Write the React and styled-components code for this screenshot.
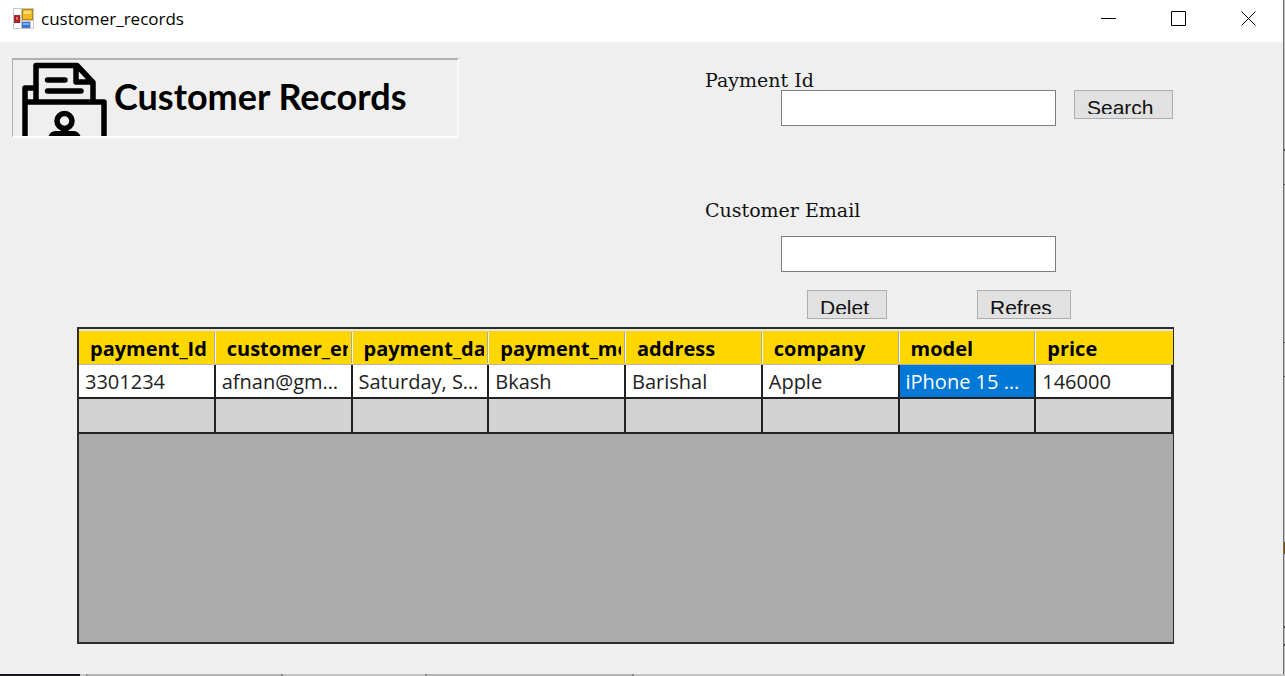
import React from "react";
import styled, { createGlobalStyle } from "styled-components";

const GlobalStyle = createGlobalStyle`
  *, *::before, *::after { box-sizing: border-box; }
  body { margin: 0; background: #c4c4c4; }
`;

const Desktop = styled.div`
  display: grid;
  grid-template-columns: minmax(0, 1fr) 2px;
  grid-template-rows: minmax(0, 1fr) 2px;
  min-height: 100vh;
  font-family: "Open Sans", "Noto Sans", sans-serif;
  color: #000;
`;

const Window = styled.main`
  display: flex;
  flex-direction: column;
  background: #efefef;
`;

const RightEdge = styled.div`
  border-left: 1px solid #6e6e6e;
  background: linear-gradient(
    #c4c4c4 149px, #444 149px 151px, #c4c4c4 151px 184px, #444 184px 185px,
    #c4c4c4 185px 342px, #444 342px 343px, #c4c4c4 343px 376px, #444 376px 377px,
    #c4c4c4 377px 542px, #805000 542px 554px, #c4c4c4 554px 626px,
    #444 626px 628px, #c4c4c4 628px 644px, #444 644px 646px, #c4c4c4 646px
  );
`;

const BottomEdge = styled.div`
  grid-column: 1 / -1;
  background: linear-gradient(
    90deg, #17171b 80px, #c8c8c8 80px 86px, #999 86px 88px, #b4b4b4 88px 281px,
    #888 281px 283px, #c4c4c4 283px 425px, #888 425px 427px, #b4b4b4 427px 632px,
    #888 632px 634px, #c4c4c4 634px
  );
`;

const TitleBar = styled.header`
  display: flex;
  align-items: flex-start;
  height: 42px;
  padding: 0 0 0 13px;
  background: #fff;

  > svg { margin-top: 8px; }
`;

const WindowTitle = styled.span`
  flex: 1;
  margin: 7px 0 0 7px;
  font-size: 17px;
  line-height: 24px;
`;

const WindowButton = styled.button`
  display: grid;
  place-items: center;
  width: 70px;
  height: 37px;
  padding: 0;
  border: 0;
  background: transparent;
`;

const Top = styled.div`
  display: grid;
  grid-template-columns: minmax(0, 1fr) 578px;
`;

const Banner = styled.div`
  display: flex;
  width: 447px;
  height: 80px;
  margin: 16px 0 0 12px;
  overflow: hidden;
  border: 2px solid;
  border-color: #b0b0b0 #fafafa #fff #b0b0b0;
  border-left-width: 1px;
`;

const BannerTitle = styled.h1`
  margin: 0 0 0 5px;
  font-family: Lato, sans-serif;
  font-size: 36px;
  font-weight: 700;
  line-height: 73px;
  white-space: nowrap;
`;

const Form = styled.form`
  padding: 26px 0 8px;
`;

const Label = styled.label`
  display: block;
  height: 22px;
  font-family: "DejaVu Serif", serif;
  font-size: 19px;
  line-height: 24px;
  color: #111;
`;

const Controls = styled.div`
  display: flex;
  align-items: flex-start;
  gap: ${(p) => p.$gap || 18}px;
  margin: ${(p) => p.$above || 0}px 0 ${(p) => p.$below || 0}px;
  padding-left: ${(p) => p.$indent || 76}px;
`;

const TextBox = styled.input`
  width: 275px;
  height: 36px;
  padding: 0 6px;
  border: 1px solid #7c7c7c;
  background: #fff;
  font: 20px "Liberation Sans", sans-serif;
`;

const PushButton = styled.button`
  width: ${(p) => p.$width}px;
  height: 29px;
  padding: 5px 12px;
  border: 1px solid #adadad;
  background: #e1e1e1;
  color: #111;
  font: 21px/24px "Liberation Sans", sans-serif;
  text-align: left;
`;

const ClippedText = styled.span`
  display: block;
  height: 18px;
  overflow: hidden;
`;

const GridPane = styled.section`
  flex: 1;
  min-height: 316px;
  margin: 0 109px 30px 77px;
  border: 2px solid #2c2c2c;
  border-right-width: 1px;
  background: #ababab;
`;

const Grid = styled.table`
  width: 100%;
  table-layout: fixed;
  border-collapse: separate;
  border-spacing: 0;
  border-top: 2px solid #e4e4e4;
`;

const HeaderCell = styled.th`
  position: relative;
  height: 34px;
  padding: 2px 5px 0 11px;
  border-bottom: 1px solid #b4b4b4;
  background: #ffd700;
  font-size: 20px;
  font-weight: 700;
  line-height: 31px;
  text-align: left;

  &:not(:last-child)::after {
    content: "";
    position: absolute;
    inset: 1px 0 1px auto;
    width: 2px;
    border-left: 1px solid #a8a8a8;
    background: #f4f4f4;
  }
`;

const HeaderText = styled.span`
  display: block;
  overflow: hidden;
  white-space: nowrap;
`;

const Cell = styled.td`
  height: ${(p) => (p.$blank ? 35 : 34)}px;
  padding: 2px 7px 0 6px;
  overflow: hidden;
  border-right: 2px solid #222;
  border-bottom: 2px solid #222;
  background: ${(p) => (p.$selected ? "#0078d7" : p.$blank ? "#d3d3d3" : "#fff")};
  color: ${(p) => (p.$selected ? "#fff" : "#222")};
  font-size: 20px;
  line-height: 30px;
  text-overflow: ellipsis;
  white-space: nowrap;
`;

const AppIcon = () => (
  <svg width="21" height="21" viewBox="0 0 21 21" aria-hidden="true">
    <path d="M0 0h21v21H0z" fill="#c6c9cc" />
    <path d="M1 1h7v6H1zM1 15h7v5H1zM18 13h2v7h-2z" fill="#fff" />
    <path d="M9 1h11v11H9z" fill="#b88618" />
    <path d="M10 2h9v9h-9z" fill="#f4b91f" />
    <path d="M11 3h7v3h-7z" fill="#ffdb72" />
    <path d="M1 7h6v8H1z" fill="#aa2328" />
    <path d="M3 9h2v3H3z" fill="#e66a65" />
    <path d="M9 14h8v6H9z" fill="#3e73d1" />
    <path d="M10 15h6v2h-6z" fill="#79aff3" />
  </svg>
);

const RecordsIcon = () => (
  <svg width="96" height="76" viewBox="13 60 96 76" aria-hidden="true" style={{ flexShrink: 0 }}>
    <g fill="none" stroke="#000" strokeWidth="5.5" strokeLinejoin="round" strokeLinecap="round">
      <path d="M25 140V88h11M25 102h79v38M36 101V65.500h41l16 17V101M76 66v16h16" />
      <path d="M47.500 80H65M47.500 91H81" />
      <circle cx="64.500" cy="121" r="7.500" />
    </g>
    <path d="M48 138c1-5 4-7 8-7h17c4 0 7 2 8 7z" />
  </svg>
);

const WINDOW_ACTIONS = [
  ["Minimize", "M0 7.500h15"],
  ["Maximize", "M.5 .5h14v14H.5z"],
  ["Close", "M.5 .5l14 14M14.500 .5l-14 14"],
];

const RECORD = [
  ["payment_Id", "3301234"],
  ["customer_email", "afnan@gmail.com"],
  ["payment_date", "Saturday, September"],
  ["payment_method", "Bkash"],
  ["address", "Barishal"],
  ["company", "Apple"],
  ["model", "iPhone 15 Pro Max"],
  ["price", "146000"],
];

const Push = ({ width, children }) => (
  <PushButton type="button" $width={width}>
    <ClippedText>{children}</ClippedText>
  </PushButton>
);

export default function App() {
  return (
    <Desktop>
      <GlobalStyle />
      <Window>
        <TitleBar>
          <AppIcon />
          <WindowTitle>customer_records</WindowTitle>
          {WINDOW_ACTIONS.map(([name, d]) => (
            <WindowButton key={name} type="button" aria-label={name}>
              <svg width="15" height="15" viewBox="0 0 15 15" fill="none" stroke="#000">
                <path d={d} />
              </svg>
            </WindowButton>
          ))}
        </TitleBar>
        <Top>
          <Banner>
            <RecordsIcon />
            <BannerTitle>Customer Records</BannerTitle>
          </Banner>
          <Form>
            <Label htmlFor="payment-id">Payment Id</Label>
            <Controls $below={72}>
              <TextBox id="payment-id" type="text" />
              <Push width={99}>Search</Push>
            </Controls>
            <Label htmlFor="customer-email">Customer Email</Label>
            <Controls $above={16} $below={18}>
              <TextBox id="customer-email" type="text" />
            </Controls>
            <Controls $indent={102} $gap={90}>
              <Push width={80}>Delet</Push>
              <Push width={94}>Refres</Push>
            </Controls>
          </Form>
        </Top>
        <GridPane>
          <Grid>
            <thead>
              <tr>
                {RECORD.map(([name]) => (
                  <HeaderCell key={name} scope="col">
                    <HeaderText>{name}</HeaderText>
                  </HeaderCell>
                ))}
              </tr>
            </thead>
            <tbody>
              <tr>
                {RECORD.map(([name, value]) => (
                  <Cell key={name} $selected={name === "model"}>{value}</Cell>
                ))}
              </tr>
              <tr>
                {RECORD.map(([name]) => (
                  <Cell key={name} $blank />
                ))}
              </tr>
            </tbody>
          </Grid>
        </GridPane>
      </Window>
      <RightEdge />
      <BottomEdge />
    </Desktop>
  );
}
